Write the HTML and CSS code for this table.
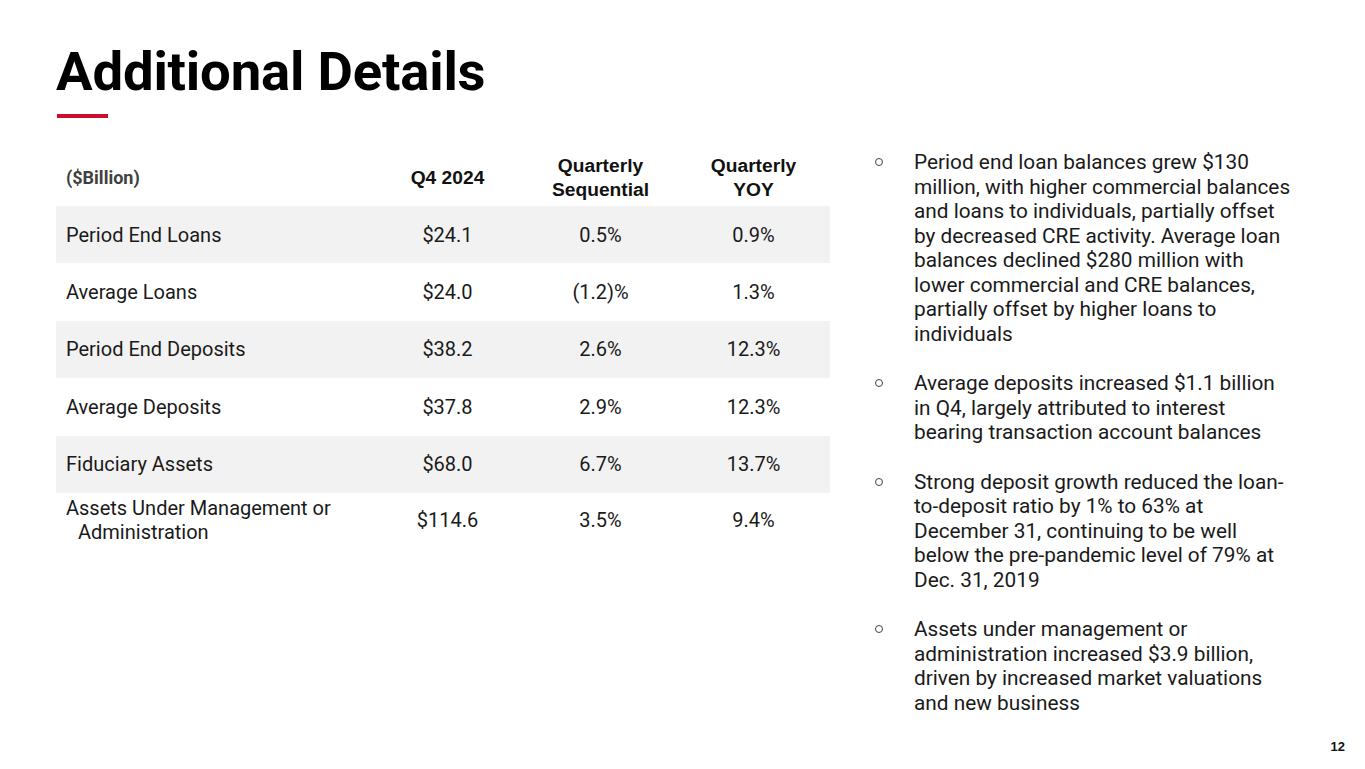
FILE: index.html
```html
<!DOCTYPE html>
<html lang="en">
<head>
<meta charset="utf-8">
<title>Additional Details</title>
<link rel="stylesheet" href="styles.css">
</head>
<body>
<div class="slide">
  <header class="head">
    <h1 class="title">Additional Details</h1>
    <div class="accent"></div>
  </header>
  <main class="content">
    <section class="table-wrap">
      <table class="data">
        <thead>
          <tr>
            <th class="label-h">($Billion)</th>
            <th>Q4 2024</th>
            <th>Quarterly<br>Sequential</th>
            <th>Quarterly<br>YOY</th>
          </tr>
        </thead>
        <tbody>
          <tr class="shade"><td class="label">Period End Loans</td><td>$24.1</td><td>0.5%</td><td>0.9%</td></tr>
          <tr><td class="label">Average Loans</td><td>$24.0</td><td>(1.2)%</td><td>1.3%</td></tr>
          <tr class="shade"><td class="label">Period End Deposits</td><td>$38.2</td><td>2.6%</td><td>12.3%</td></tr>
          <tr><td class="label">Average Deposits</td><td>$37.8</td><td>2.9%</td><td>12.3%</td></tr>
          <tr class="shade"><td class="label">Fiduciary Assets</td><td>$68.0</td><td>6.7%</td><td>13.7%</td></tr>
          <tr class="last"><td class="label hang">Assets Under Management or Administration</td><td>$114.6</td><td>3.5%</td><td>9.4%</td></tr>
        </tbody>
      </table>
    </section>
    <section class="notes">
      <ul class="bullets">
        <li>Period end loan balances grew $130 million, with higher commercial balances and loans to individuals, partially offset by decreased CRE activity. Average loan balances declined $280 million with lower commercial and CRE balances, partially offset by higher loans to individuals</li>
        <li>Average deposits increased $1.1 billion in Q4, largely attributed to interest bearing transaction account balances</li>
        <li>Strong deposit growth reduced the loan-to-deposit ratio by 1% to 63% at December 31, continuing to be well below the pre-pandemic level of 79% at Dec. 31, 2019</li>
        <li>Assets under management or administration increased $3.9 billion, driven by increased market valuations and new business</li>
      </ul>
    </section>
  </main>
  <footer class="foot"><span class="page-num">12</span></footer>
</div>
</body>
</html>
```
FILE: styles.css
```css
* { box-sizing: border-box; }
html, body { margin: 0; padding: 0; background: #ffffff; }
body { font-family: Roboto, "Liberation Sans", Arial, sans-serif; color: #1a1a1a; }

.slide {
  width: 1365px;
  height: 769px;
  position: relative;
  display: flex;
  flex-direction: column;
  overflow: hidden;
}

.head { padding: 43px 0 0 56px; }
.title {
  margin: 0;
  font-family: Roboto, sans-serif;
  font-weight: 700;
  font-size: 54.5px;
  line-height: 56px;
  color: #000;
  letter-spacing: -0.2px;
}
.accent {
  width: 51px;
  height: 4px;
  background: #c8102e;
  margin: 15px 0 0 1px;
}

.content {
  display: flex;
  align-items: flex-start;
  padding: 32px 0 0 56px;
}

.table-wrap { width: 774px; flex: none; }
.data {
  width: 774px;
  border-collapse: collapse;
  table-layout: fixed;
}
.data th, .data td { padding: 0; }
.data th {
  font-family: "Liberation Sans", Arial, sans-serif;
  font-weight: 700;
  font-size: 19.2px;
  line-height: 24px;
  color: #111;
  text-align: center;
  height: 56px;
  width: 153px;
  vertical-align: middle;
}
.data th.label-h {
  width: 315px;
  text-align: left;
  padding-left: 10px;
  font-family: Roboto, sans-serif;
  font-weight: 700;
  font-size: 18px;
  color: #404040;
}
.data td {
  font-size: 20px;
  line-height: 24px;
  height: 57.4px;
  text-align: center;
  vertical-align: middle;
  color: #1a1a1a;
}
.data td.label { text-align: left; padding-left: 10px; }
.data td.hang { padding-left: 22px; text-indent: -12px; }
.data tr.shade td { background: #f2f2f2; }
.data tr.last td { vertical-align: top; padding-top: 3px; }
.data tr.last td:not(.label) { padding-top: 15px; }

.notes { margin-left: 45px; width: 417px; }
.bullets {
  list-style: none;
  margin: 0;
  padding: 0;
  font-size: 20.8px;
  line-height: 24.5px;
  color: #1a1a1a;
}
.bullets li {
  position: relative;
  padding-left: 39px;
  margin-bottom: 25px;
}
.bullets li::before {
  content: "";
  position: absolute;
  left: 0;
  top: 8px;
  width: 6px;
  height: 6px;
  border: 1px solid #444;
  border-radius: 50%;
}

.foot {
  position: absolute;
  right: 20px;
  bottom: 14px;
}
.page-num {
  font-family: "Liberation Sans", Arial, sans-serif;
  font-weight: 700;
  font-size: 13px;
  color: #111;
}
```
